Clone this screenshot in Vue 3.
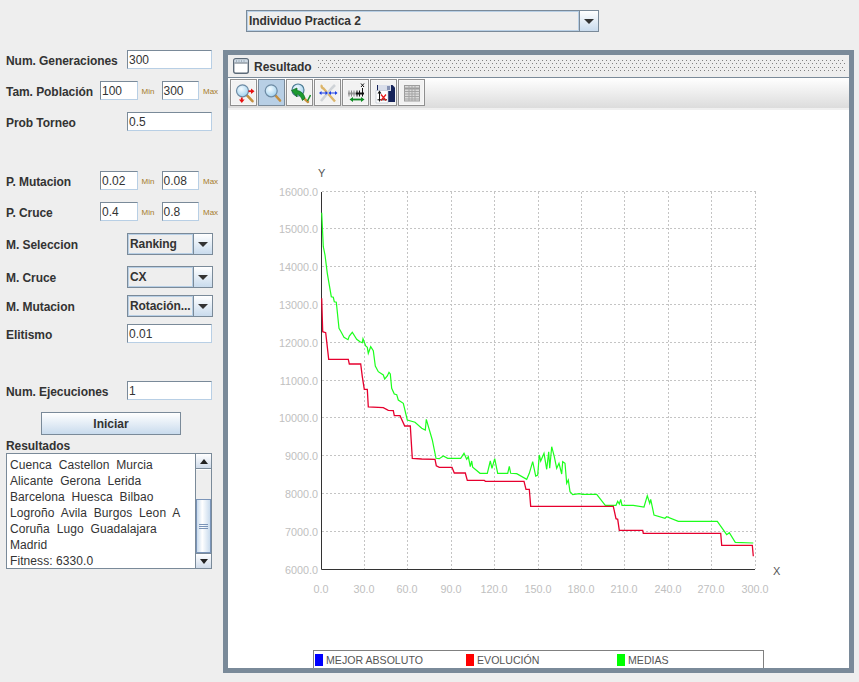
<script setup>
const xTicks = [0, 30, 60, 90, 120, 150, 180, 210, 240, 270, 300].map((v, i) => ({ label: v.toFixed(1), x: [321.5, 364.5, 407.5, 451.5, 494.5, 538.5, 581.5, 624.5, 668.5, 711.5, 755.5][i] }))
const yTicks = [16000, 15000, 14000, 13000, 12000, 11000, 10000, 9000, 8000, 7000, 6000].map((v, i) => ({
  label: v.toFixed(1),
  y: [191.5, 228.5, 266.5, 304.5, 342.5, 380.5, 417.5, 455.5, 493.5, 531.5, 569.5][i]
}))
const green = '321.7,212.7 323.3,246.7 325,255 327.3,273.3 331.3,296.7 333.3,297.3 334.3,301.7 336.3,302.3 339,328.3 341,331.7 344,337.3 348,339.7 349.3,336 352.3,332.3 356.7,339.3 360,341.7 362.3,342.7 363,338.7 365.7,346 367.3,347.3 368.3,353.3 370.7,346.7 373.3,350.7 375.3,366 378.3,371.7 383.3,375 384.7,379 387.3,376 389,372.3 390.3,374 391.7,388.3 394.3,394 396.7,394.7 398.3,400 403.3,403.3 407.3,420 415,422.3 421.7,428.3 425.3,430 426.3,419.3 432.3,440 436,458.3 439.3,458.7 443.3,456 447.7,458.3 460.7,458.3 464,453.3 466.7,459.3 468.3,456.7 470.3,466.7 471.7,461 472.7,467.3 480,473.3 487.3,473.3 490.3,461 492,468.3 494.7,458.7 497.7,473.3 507.7,473.3 509.3,466.3 510.7,473.3 516.7,473.7 526.7,479.3 529.3,473.3 532.7,461.7 535.7,476 537.7,475 539.3,455 540.7,461 544,453.3 546.7,469.3 548.7,451.7 549.7,468.3 551.7,446.7 554.3,456.7 556.7,468.3 559,463.3 561.7,474 562.7,461.7 565,463.3 566.7,483.3 568.3,480 570,491.7 572.7,494.7 579.3,493.7 582.3,494.3 596.7,494.3 605.3,505.3 616,505.3 617.7,501.3 619.3,504 620.7,499.3 622,505.3 633.3,505.3 644,507 647.3,495.7 649.7,503.3 650.7,499.3 654,515 665,518.3 666.7,516.7 678.3,521.3 717.3,521.3 726.7,534.7 729.3,532.7 735.3,542.3 753.3,543'
const red = '321.7,298.3 322.7,331.7 325.7,332.7 328.7,359.3 348.3,359.3 349.3,364 360.7,364 362.3,376.7 364.3,389.3 367.3,389.3 368.3,407 383.3,407.7 388.3,410.3 393.3,410.7 394.3,415.7 400,415.7 404.7,426 410.3,426 412.3,458.3 421.7,459 435,459.3 436.3,465.7 439.3,467.3 452,467.3 454.3,473 465.3,473 467.3,480.3 484.3,480.3 485.3,481.3 524,481.3 526,489.3 529.3,489.3 530.7,506.3 613.3,506.3 616,518.7 617.7,519.3 619.3,530.3 642.7,530.3 643.3,533.3 720.7,533.3 721.7,545.3 752.3,545.3 753.3,556.3'
const legend = [
  { name: 'MEJOR ABSOLUTO', color: '#0000ff' },
  { name: 'EVOLUCIÓN', color: '#ff0000' },
  { name: 'MEDIAS', color: '#00ff00' }
]
const result = ['Cuenca  Castellon  Murcia', 'Alicante  Gerona  Lerida', 'Barcelona  Huesca  Bilbao', 'Logroño  Avila  Burgos  Leon  A', 'Coruña  Lugo  Guadalajara', 'Madrid', 'Fitness: 6330.0']
</script>

<template>
  <div class="app">
    <div class="top">
      <div class="combo main-combo"><span class="combo-text">Individuo Practica 2</span><span class="arrow"><i></i></span></div>
    </div>
    <div class="body">
      <aside class="side">
        <div class="row r1"><label>Num. Generaciones</label><div class="tf wide">300</div></div>
        <div class="row r2"><label class="short">Tam. Población</label><div class="tf mini">100</div><small>Min</small><div class="tf mini">300</div><small>Max</small></div>
        <div class="row r3"><label>Prob Torneo</label><div class="tf wide">0.5</div></div>
        <div class="row r4"><label class="short">P. Mutacion</label><div class="tf mini">0.02</div><small>Min</small><div class="tf mini">0.08</div><small>Max</small></div>
        <div class="row r5"><label class="short">P. Cruce</label><div class="tf mini">0.4</div><small>Min</small><div class="tf mini">0.8</div><small>Max</small></div>
        <div class="row r6"><label>M. Seleccion</label><div class="combo small-combo"><span class="combo-text">Ranking</span><span class="arrow"><i></i></span></div></div>
        <div class="row r7"><label>M. Cruce</label><div class="combo small-combo"><span class="combo-text">CX</span><span class="arrow"><i></i></span></div></div>
        <div class="row r8"><label>M. Mutacion</label><div class="combo small-combo"><span class="combo-text">Rotación...</span><span class="arrow"><i></i></span></div></div>
        <div class="row r9"><label>Elitismo</label><div class="tf wide">0.01</div></div>
        <div class="row r10"><label>Num. Ejecuciones</label><div class="tf wide">1</div></div>
        <button class="start">Iniciar</button>
        <div class="res-title">Resultados</div>
        <div class="results">
          <div class="res-text"><div v-for="l in result" :key="l">{{ l }}</div></div>
          <div class="scroll">
            <span class="sb up"><i></i></span>
            <span class="track"></span>
            <span class="thumb"><b></b><b></b><b></b></span>
            <span class="sb down"><i></i></span>
          </div>
        </div>
      </aside>
      <section class="frame">
        <header class="title">
          <svg width="16" height="16" viewBox="0 0 16 16" class="win"><rect x="0.7" y="0.7" width="14.6" height="14.6" rx="2" fill="#fff" stroke="#5c6a78" stroke-width="1.4"/><rect x="1.5" y="1.5" width="13" height="3" fill="#cfdbe6"/><path d="M1.5 5H14.5" stroke="#5c6a78"/><path d="M3 3h1M5.5 3h1M8 3h1M10.500 3h1" stroke="#7a8a99"/></svg>
          <span class="title-text">Resultado</span>
          <div class="dots"></div>
        </header>
        <div class="toolbar">
          <button class="tool">
            <svg width="22" height="22" viewBox="0 0 22 22">
              <defs><radialGradient id="lens" cx="40%" cy="35%" r="70%"><stop offset="0" stop-color="#f4fbff"/><stop offset="1" stop-color="#9fd0ee"/></radialGradient></defs>
              <path d="M13.800 13.200L19.500 19.200" stroke="#c58f3e" stroke-width="2.6" stroke-linecap="round"/>
              <circle cx="9.500" cy="8.800" r="6" fill="url(#lens)" stroke="#6d8aa3" stroke-width="1.2"/>
              <path d="M15.500 9.200h3" stroke="#e81010" stroke-width="1.800"/><path d="M18 6.500l3.500 2.700-3.500 2.700z" fill="#e81010"/>
              <path d="M8.800 15.500v2.500" stroke="#e81010" stroke-width="1.800"/><path d="M6 17.500h5.600l-2.800 3.500z" fill="#e81010"/>
            </svg>
          </button>
          <button class="tool on">
            <svg width="22" height="22" viewBox="0 0 22 22">
              <path d="M14.500 13.500L19 18.500" stroke="#c58f3e" stroke-width="2.600" stroke-linecap="round"/>
              <circle cx="10.200" cy="8.800" r="6" fill="url(#lens)" stroke="#6d8aa3" stroke-width="1.200"/>
            </svg>
          </button>
          <button class="tool">
            <svg width="22" height="22" viewBox="0 0 22 22">
              <circle cx="9" cy="8" r="6" fill="url(#lens)" stroke="#4f7d94" stroke-width="1.200"/>
              <path d="M14 15.500l5 4.500" stroke="#c58f3e" stroke-width="2.400" stroke-linecap="round"/>
              <path d="M2.500 8.500l5.500-2.500v2.600c3.400.2 6.700 2.700 8 7.400l-2.500 2.500c-1.300-3.500-3-5.700-5.500-6.500v3z" fill="#1c9a30" stroke="#0d6a1c" stroke-width=".7"/>
              <path d="M18.500 19l3-6" stroke="#1b8f2c" stroke-width="1.500"/>
            </svg>
          </button>
          <button class="tool">
            <svg width="22" height="22" viewBox="0 0 22 22">
              <path d="M5 3c-1 1.500 0 3 1.500 3.500L18 19.500" stroke="#dcb56a" stroke-width="2.400" fill="none"/>
              <path d="M18 3L15 6L4 19" stroke="#cfd3d7" stroke-width="2.600" fill="none"/>
              <path d="M3 11h7M12.500 11h7" stroke="#1a3fe6" stroke-width="1.100"/>
              <path d="M2 11l2.500-2v4zM11 11l-2.500-2v4zM11.500 11l2.500-2v4zM20.500 11l-2.500-2v4z" fill="#1a3fe6"/>
            </svg>
          </button>
          <button class="tool">
            <svg width="22" height="22" viewBox="0 0 22 22">
              <path d="M3 11.500h8" stroke="#9a9a9a" stroke-width="2"/><path d="M11 11.500h8" stroke="#111" stroke-width="2"/>
              <path d="M4 8.500v6M6.500 8.500v6M9 8.500v6" stroke="#8a8a8a"/>
              <path d="M12 8.500v6M14.500 8.500v6M17.500 6v8.500" stroke="#111"/>
              <path d="M7 17.500h10" stroke="#0e8a22" stroke-width="1.800"/><path d="M8 15l-3.500 2.500L8 20zM16 15l3.500 2.500L16 20z" fill="#0e8a22"/>
              <path d="M16 1.500l3 3.500M19 1.500l-3 3.500" stroke="#111"/>
            </svg>
          </button>
          <button class="tool">
            <svg width="22" height="22" viewBox="0 0 22 22">
              <path d="M4 3h15.500l2.500 2.500V20H4z" fill="#16245a"/>
              <path d="M5 3h13v6H5z" fill="#d9deea"/>
              <path d="M14 4h3v4h-3z" fill="#8491b3"/>
              <path d="M3 8.500h12V21H3z" fill="#fff" stroke="#b4bccb" stroke-width=".6"/>
              <path d="M6.500 10v9.500M4.500 17.800H14" stroke="#111"/><path d="M6.500 8.500L4.500 11.500h4z" fill="#111"/>
              <path d="M8 18.500l5-6M8 12.500l5 6" stroke="#e61818" stroke-width="1.300"/>
            </svg>
          </button>
          <button class="tool">
            <svg width="22" height="22" viewBox="0 0 22 22">
              <rect x="3.500" y="3.500" width="15" height="15.500" fill="#dadada" stroke="#9c9c9c"/>
              <path d="M3.500 6.500h15" stroke="#9c9c9c" stroke-width="2"/>
              <path d="M3.500 9.500h15M3.500 12h15M3.500 14.500h15M3.500 17h15M8 3.500v15.500M11 3.500v15.500M14 3.500v15.500" stroke="#a5a5a5"/>
            </svg>
          </button>
        </div>
        <div class="canvas">
          <svg class="plot" width="859" height="682" viewBox="0 0 859 682">
            <g stroke="#c4c4c4" stroke-dasharray="2 2" fill="none">
              <path v-for="t in yTicks.slice(0, 10)" :key="t.y" :d="`M322 ${t.y}H756`" />
              <path v-for="t in xTicks.slice(1)" :key="t.x" :d="`M${t.x} 192V569`" />
            </g>
            <path d="M321.500 192V569.500H755" stroke="#333" stroke-width="1" fill="none" />
            <polyline :points="green" fill="none" stroke="#1cff1c" stroke-width="1.200" />
            <polyline :points="red" fill="none" stroke="#e6002e" stroke-width="1.300" />
            <g class="ticks">
              <text v-for="t in yTicks" :key="t.label" x="318" :y="t.y + 4.5" text-anchor="end">{{ t.label }}</text>
              <text v-for="t in xTicks" :key="t.label" :x="t.x - 0.5" y="593" text-anchor="middle">{{ t.label }}</text>
            </g>
            <text class="axis" x="318" y="177">Y</text>
            <text class="axis" x="773" y="575">X</text>
          </svg>
          <div class="legend">
            <div v-for="l in legend" :key="l.name" class="leg">
              <i :style="{ background: l.color }"></i><span>{{ l.name }}</span>
            </div>
          </div>
        </div>
      </section>
    </div>
  </div>
</template>

<style>
html, body { margin: 0; padding: 0; background: #eeeeee; overflow: hidden; }
</style>

<style scoped>
.app { width: 859px; height: 682px; background: #eeeeee; font-family: "Liberation Sans", Arial, sans-serif; font-size: 12px; color: #333; overflow: hidden; }
.top { height: 50px; padding: 10px 0 0 246px; box-sizing: border-box; }
.combo { display: flex; box-sizing: border-box; border: 1px solid #7a8a99; background: #eeeeee; font-weight: 700; letter-spacing: -0.08px; }
.main-combo { width: 353px; height: 22px; }
.small-combo { width: 86px; height: 22px; }
.combo-text { flex: 1; padding: 0 1px; line-height: 18px; border: 1px solid #b8cfe5; white-space: nowrap; overflow: hidden; color: #333; }
.arrow { width: 18px; flex: none; border-left: 1px solid #7a8a99; background: linear-gradient(#fff, #c9dbed); display: flex; align-items: center; justify-content: center; }
.arrow i { border-left: 5px solid transparent; border-right: 5px solid transparent; border-top: 5px solid #333; }
.body { display: flex; height: 632px; }
.side { width: 223px; flex: none; box-sizing: border-box; padding-left: 6px; }
.row { display: flex; align-items: center; height: 19px; }
.row label { width: 121px; padding-top: 2px; font-weight: 700; color: #333; white-space: nowrap; flex: none; letter-spacing: -0.06px; }
.row label.short { width: 94px; }
.tf { box-sizing: border-box; height: 19px; background: #fff; border: 1px solid #7a8a99; border-right-color: #b8cfe5; border-bottom-color: #b8cfe5; padding-left: 1px; line-height: 19px; color: #333; font-size: 12px; }
.wide { width: 85px; }
.mini { width: 38px; }
.row small { width: 24px; box-sizing: border-box; padding: 2px 0 0 4px; font-size: 8px; color: #a67c2d; flex: none; white-space: nowrap; }
.r2 { margin-top: 12px; }
.r3 { margin-top: 12px; }
.r4 { margin-top: 40px; }
.r5 { margin-top: 12px; }
.r6 { margin-top: 12px; height: 22px; }
.r7 { margin-top: 11px; height: 22px; }
.r8 { margin-top: 7px; height: 22px; }
.r9 { margin-top: 7px; }
.r10 { margin-top: 38px; }
.start { display: block; width: 140px; height: 23px; margin: 12px 0 0 35px; border: 1px solid #7a8a99; background: linear-gradient(#fff, #c9dbed); font: 700 12px "Liberation Sans", Arial, sans-serif; color: #333; padding: 0; }
.res-title { font-weight: 700; margin-top: 4px; height: 14px; line-height: 14px; letter-spacing: -0.06px; }
.results { width: 206px; height: 116px; box-sizing: border-box; border: 1px solid #7a8a99; background: #fff; display: flex; }
.res-text { flex: 1; padding: 3px 0 0 3px; line-height: 16px; overflow: hidden; white-space: pre; color: #333; letter-spacing: 0.08px; }
.scroll { width: 16px; flex: none; box-sizing: border-box; display: flex; flex-direction: column; background: #eeeeee; border-left: 1px solid #7a8a99; }
.sb { height: 15px; flex: none; background: linear-gradient(#fff, #d0dcea); display: flex; align-items: center; justify-content: center; border-bottom: 1px solid #7a8a99; box-sizing: border-box; }
.sb.down { border-bottom: 0; border-top: 1px solid #7a8a99; }
.sb i { border-left: 4px solid transparent; border-right: 4px solid transparent; }
.up i { border-bottom: 5px solid #222; }
.down i { border-top: 5px solid #222; }
.track { height: 30px; flex: none; border-top: 1px solid #fff; box-sizing: border-box; }
.thumb { flex: 1; box-sizing: border-box; border: 1px solid #7a94b8; background: linear-gradient(90deg, #c9dbed, #fff 40%, #c9dbed); display: flex; flex-direction: column; align-items: center; justify-content: center; gap: 1px; }
.thumb b { width: 9px; height: 1px; background: #7a94b8; }
.frame { width: 631px; height: 623px; box-sizing: border-box; border: 5px solid #7a8a99; background: #fff; display: flex; flex-direction: column; position: relative; }
.title { height: 23px; flex: none; box-sizing: border-box; display: flex; align-items: center; background: #eeeeee; border-bottom: 1px solid #7a8a99; padding: 0 4px 0 5px; font-weight: 700; color: #333; gap: 5px; letter-spacing: -0.04px; }
.title-text { padding-top: 2px; }
.dots { flex: 1; height: 15px; margin-left: 1px; background-image: radial-gradient(circle at 0.5px 0.5px, #808080 0.8px, transparent 0.85px), radial-gradient(circle at 0.5px 0.5px, #808080 0.8px, transparent 0.85px); background-size: 4px 7px, 4px 7px; background-position: 0 1px, 2px 4px; }
.toolbar { height: 32px; flex: none; box-sizing: border-box; display: flex; gap: 1px; padding: 1px 0 0 2px; background: linear-gradient(#fff 0, #dcdcdc 30px, #f0f0f0 30px); }
.tool { width: 27px; height: 27px; padding: 0; border: 1px solid #8f8f8f; box-shadow: inset 0 0 0 1px #f8f8f8; background: #f2f2f2; display: flex; align-items: center; justify-content: center; box-sizing: border-box; }
.tool.on { background: #b8cfe5; border-color: #7a8a99; box-shadow: none; }
.canvas { flex: 1; position: relative; overflow: hidden; }
.plot { position: absolute; left: -228px; top: -110px; }
.ticks text { font: 10.8px "Liberation Sans", Arial, sans-serif; fill: #c0c0c0; }
.axis { font: 11px "Liberation Sans", Arial, sans-serif; fill: #555; }
.legend { position: absolute; left: 85px; bottom: 0; width: 451px; height: 18px; box-sizing: border-box; border: 1px solid #808080; border-bottom: 0; background: #fff; display: flex; align-items: center; padding-left: 1px; }
.leg { width: 151px; display: flex; align-items: center; gap: 3px; font-size: 10.6px; color: #555; flex: none; }
.leg i { width: 8px; height: 12px; }
</style>
